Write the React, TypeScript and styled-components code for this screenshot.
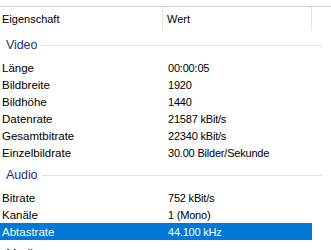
import styled, { createGlobalStyle } from 'styled-components';

const GlobalStyle = createGlobalStyle`
  html, body {
    margin: 0;
    padding: 0;
    background: #ffffff;
    overflow: hidden;
  }
  body {
    font-family: "Liberation Sans", Arial, sans-serif;
    font-size: 11px;
    color: #000000;
  }
`;

type Row = { name: string; value: string; selected?: boolean };
type Group = { title: string; rows: Row[] };

const groups: Group[] = [
  {
    title: 'Video',
    rows: [
      { name: 'Länge', value: '00:00:05' },
      { name: 'Bildbreite', value: '1920' },
      { name: 'Bildhöhe', value: '1440' },
      { name: 'Datenrate', value: '21587 kBit/s' },
      { name: 'Gesamtbitrate', value: '22340 kBit/s' },
      { name: 'Einzelbildrate', value: '30.00 Bilder/Sekunde' },
    ],
  },
  {
    title: 'Audio',
    rows: [
      { name: 'Bitrate', value: '752 kBit/s' },
      { name: 'Kanäle', value: '1 (Mono)' },
      { name: 'Abtastrate', value: '44.100 kHz', selected: true },
    ],
  },
  { title: 'Medien', rows: [] },
];

const Page = styled.div`
  padding-top: 6px;
  width: 331px;
  height: 250px;
  box-sizing: border-box;
  overflow: hidden;
`;

const Header = styled.div`
  display: grid;
  grid-template-columns: 163px 149px 1fr;
  height: 24px;
  border-top: 1px solid #cdcdcd;
`;

const HeaderCell = styled.div<{ $last?: boolean }>`
  display: flex;
  align-items: center;
  padding-left: 2px;
  font-size: 11px;
  border-right: ${(p) => (p.$last ? 'none' : '1px solid #e5e5e5')};
  & + & {
    padding-left: 4px;
  }
`;

const GroupTitle = styled.div`
  display: flex;
  align-items: center;
  gap: 5px;
  height: 28px;
  padding-left: 6px;
  padding-right: 9px;
  color: #1e3287;
  font-size: 12.5px;
  letter-spacing: -0.1px;
`;

const GroupLine = styled.div`
  flex: 1;
  height: 1px;
  background: #dfe4ea;
`;

const ItemRow = styled.div<{ $selected?: boolean }>`
  display: grid;
  grid-template-columns: 166px 146px;
  width: 312px;
  height: 17px;
  align-items: center;
  background: ${(p) => (p.$selected ? '#0078d7' : 'transparent')};
  color: ${(p) => (p.$selected ? '#ffffff' : '#000000')};
  white-space: nowrap;
`;

const NameCell = styled.div`
  padding-left: 2px;
  font-size: 11.5px;
`;

const ValueCell = styled.div`
  padding-left: 2px;
  font-size: 11px;
  letter-spacing: -0.2px;
`;

export default function App() {
  return (
    <>
      <GlobalStyle />
      <Page>
        <Header>
          <HeaderCell>Eigenschaft</HeaderCell>
          <HeaderCell>Wert</HeaderCell>
          <HeaderCell $last />
        </Header>
        {groups.map((g) => (
          <div key={g.title}>
            <GroupTitle>
              {g.title}
              <GroupLine />
            </GroupTitle>
            {g.rows.map((r) => (
              <ItemRow key={r.name} $selected={r.selected}>
                <NameCell>{r.name}</NameCell>
                <ValueCell>{r.value}</ValueCell>
              </ItemRow>
            ))}
          </div>
        ))}
      </Page>
    </>
  );
}
